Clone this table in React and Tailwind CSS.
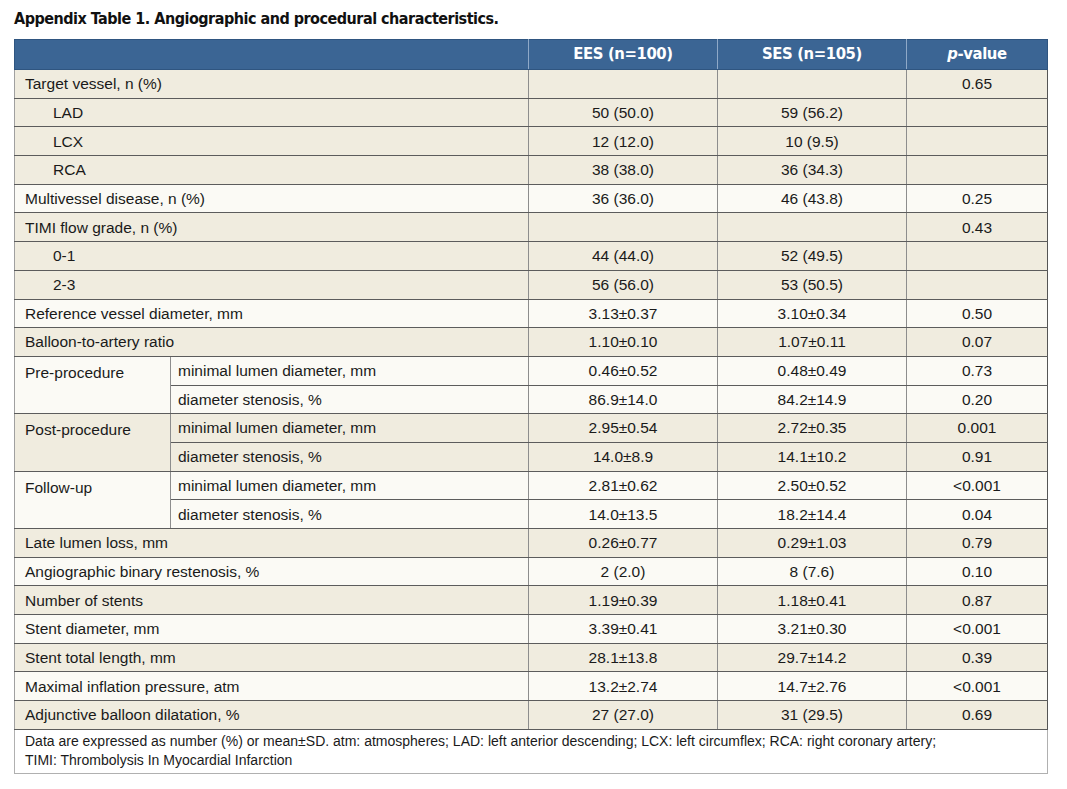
import React from "react";

const rows = [
  { label: "Target vessel, n (%)", a: "", b: "", p: "0.65", bg: "beige" },
  { label: "LAD", indent: true, a: "50 (50.0)", b: "59 (56.2)", p: "", bg: "beige" },
  { label: "LCX", indent: true, a: "12 (12.0)", b: "10 (9.5)", p: "", bg: "beige" },
  { label: "RCA", indent: true, a: "38 (38.0)", b: "36 (34.3)", p: "", bg: "beige" },
  { label: "Multivessel disease, n (%)", a: "36 (36.0)", b: "46 (43.8)", p: "0.25", bg: "white" },
  { label: "TIMI flow grade, n (%)", a: "", b: "", p: "0.43", bg: "beige" },
  { label: "0-1", indent: true, a: "44 (44.0)", b: "52 (49.5)", p: "", bg: "beige" },
  { label: "2-3", indent: true, a: "56 (56.0)", b: "53 (50.5)", p: "", bg: "beige" },
  { label: "Reference vessel diameter, mm", a: "3.13±0.37", b: "3.10±0.34", p: "0.50", bg: "white" },
  { label: "Balloon-to-artery ratio", a: "1.10±0.10", b: "1.07±0.11", p: "0.07", bg: "beige" },
  { group: "Pre-procedure", sub: "minimal lumen diameter, mm", a: "0.46±0.52", b: "0.48±0.49", p: "0.73", bg: "white" },
  { sub: "diameter stenosis, %", a: "86.9±14.0", b: "84.2±14.9", p: "0.20", bg: "white" },
  { group: "Post-procedure", sub: "minimal lumen diameter, mm", a: "2.95±0.54", b: "2.72±0.35", p: "0.001", bg: "beige" },
  { sub: "diameter stenosis, %", a: "14.0±8.9", b: "14.1±10.2", p: "0.91", bg: "beige" },
  { group: "Follow-up", sub: "minimal lumen diameter, mm", a: "2.81±0.62", b: "2.50±0.52", p: "<0.001", bg: "white" },
  { sub: "diameter stenosis, %", a: "14.0±13.5", b: "18.2±14.4", p: "0.04", bg: "white" },
  { label: "Late lumen loss, mm", a: "0.26±0.77", b: "0.29±1.03", p: "0.79", bg: "beige" },
  { label: "Angiographic binary restenosis, %", a: "2 (2.0)", b: "8 (7.6)", p: "0.10", bg: "white" },
  { label: "Number of stents", a: "1.19±0.39", b: "1.18±0.41", p: "0.87", bg: "beige" },
  { label: "Stent diameter, mm", a: "3.39±0.41", b: "3.21±0.30", p: "<0.001", bg: "white" },
  { label: "Stent total length, mm", a: "28.1±13.8", b: "29.7±14.2", p: "0.39", bg: "beige" },
  { label: "Maximal inflation pressure, atm", a: "13.2±2.74", b: "14.7±2.76", p: "<0.001", bg: "white" },
  { label: "Adjunctive balloon dilatation, %", a: "27 (27.0)", b: "31 (29.5)", p: "0.69", bg: "beige" },
];

const condensed = {
  fontFamily: '"Liberation Sans Narrow", "DejaVu Sans Condensed", "DejaVu Sans", sans-serif',
};

export default function App() {
  return (
    <div className="bg-white w-[1067px] h-[789px] pt-[8px] pl-[14px] text-[#1a1a1a] font-['Liberation_Sans',Arial,sans-serif]">
      <div
        className="text-[16px] font-bold leading-[22px] h-[31px] tracking-[-0.5px] [font-stretch:condensed] text-[#111]"
        style={condensed}
      >
        Appendix Table 1. Angiographic and procedural characteristics.
      </div>
      <table className="w-[1033px] table-fixed border-collapse text-[15.5px]">
        <colgroup>
          <col className="w-[156px]" />
          <col className="w-[358px]" />
          <col className="w-[189px]" />
          <col className="w-[189px]" />
          <col className="w-[141px]" />
        </colgroup>
        <thead>
          <tr className="h-[30px] bg-[#3b6594] text-white">
            <th colSpan={2} className="border border-[#2f5580] border-r-[#8fa9c8]"></th>
            <th
              className="border border-[#2f5580] border-r-[#8fa9c8] border-l-[#8fa9c8] text-[16.5px] tracking-[-0.4px] font-bold [font-stretch:condensed]"
              style={condensed}
            >
              EES (n=100)
            </th>
            <th
              className="border border-[#2f5580] border-r-[#8fa9c8] border-l-[#8fa9c8] text-[16.5px] tracking-[-0.4px] font-bold [font-stretch:condensed]"
              style={condensed}
            >
              SES (n=105)
            </th>
            <th
              className="border border-[#2f5580] border-l-[#8fa9c8] text-[16.5px] tracking-[-0.4px] font-bold [font-stretch:condensed]"
              style={condensed}
            >
              <i>p</i>-value
            </th>
          </tr>
        </thead>
        <tbody>
          {rows.map((r, i) => {
            const bg = r.bg === "beige" ? "bg-[#f0ecdf]" : "bg-[#fbfaf5]";
            const cell = "text-[15.5px] border-y border-[#5c5c5c] border-x border-x-[#8d8d8d]";
            return (
              <tr key={i} className={`h-[28.7px] ${bg}`}>
                {r.sub !== undefined ? (
                  <>
                    {r.group !== undefined && (
                      <td rowSpan={2} className={`${cell} align-top pl-[10px] pt-[4px] border-l-[#a0a0a0]`}>
                        {r.group}
                      </td>
                    )}
                    <td className={`${cell} pl-[7px] whitespace-nowrap`}>{r.sub}</td>
                  </>
                ) : (
                  <td
                    colSpan={2}
                    className={`${cell} border-l-[#a0a0a0] whitespace-nowrap ${r.indent ? "pl-[38px]" : "pl-[10px]"}`}
                  >
                    {r.label}
                  </td>
                )}
                <td className={`${cell} text-center`}>{r.a}</td>
                <td className={`${cell} text-center`}>{r.b}</td>
                <td className={`${cell} text-center border-r-[#555]`}>{r.p}</td>
              </tr>
            );
          })}
          <tr className="bg-white">
            <td
              colSpan={5}
              className="border border-[#b0b0b0] border-t-[#5c5c5c] pl-[10px] pt-[2px] pb-[3px] text-[14px] leading-[19px]"
            >
              Data are expressed as number (%) or mean±SD. atm: atmospheres; LAD: left anterior descending; LCX: left
              circumflex; RCA: right coronary artery;
              <br />
              TIMI: Thrombolysis In Myocardial Infarction
            </td>
          </tr>
        </tbody>
      </table>
    </div>
  );
}
